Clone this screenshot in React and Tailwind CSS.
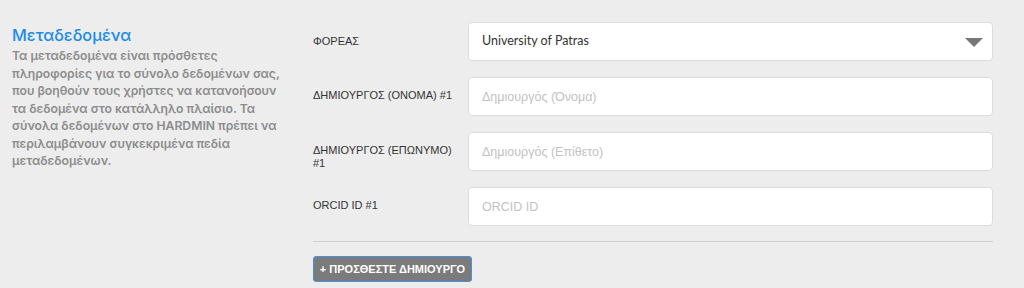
import React, { useState } from 'react';

const fields = [
  { label: 'ΔΗΜΙΟΥΡΓΟΣ (ΟΝΟΜΑ) #1', placeholder: 'Δημιουργός (Όνομα)' },
  { label: 'ΔΗΜΙΟΥΡΓΟΣ (ΕΠΩΝΥΜΟ) #1', placeholder: 'Δημιουργός (Επίθετο)' },
  { label: 'ORCID ID #1', placeholder: 'ORCID ID' },
];

const App = () => {
  const [org, setOrg] = useState('University of Patras');

  return (
    <div className="w-[1024px] h-[288px] bg-[#ededed] flex overflow-hidden">
      <div className="w-[313px] shrink-0 pl-3 pr-6 pt-[24px] font-['Inter',sans-serif]">
        <h2 className="text-[16.3px] leading-[22px] text-[#1a8be6] font-medium">Μεταδεδομένα</h2>
        <p className="mt-[1px] text-[12.2px] leading-[17.5px] font-semibold text-[#8c8c8c]">
          Τα μεταδεδομένα είναι πρόσθετες πληροφορίες για το σύνολο δεδομένων σας, που βοηθούν τους
          χρήστες να κατανοήσουν τα δεδομένα στο κατάλληλο πλαίσιο. Τα σύνολα δεδομένων στο HARDMIN
          πρέπει να περιλαμβάνουν συγκεκριμένα πεδία μεταδεδομένων.
        </p>
      </div>

      <div className="w-[680px] pt-[22px] flex flex-col font-['Liberation_Sans',sans-serif]">
        <div className="flex flex-col gap-[16px]">
          <div className="flex items-start">
            <label className="w-[155px] shrink-0 pt-[13px] pr-2 text-[11px] leading-[13px] text-[#333]">ΦΟΡΕΑΣ</label>
            <div className="relative flex-1">
              <select
                value={org}
                onChange={(e) => setOrg(e.target.value)}
                className="appearance-none w-full h-[39px] bg-white border border-[#dcdcdc] rounded-[4px] pl-[13px] text-[12.5px] text-[#333] font-['Lato',sans-serif] outline-none"
              >
                <option>University of Patras</option>
              </select>
              <svg className="absolute right-[10px] top-[16px] pointer-events-none" width="18" height="9" viewBox="0 0 18 9">
                <polygon points="0,0 18,0 9,9" fill="#777" />
              </svg>
            </div>
          </div>

          {fields.map((f) => (
            <div key={f.label} className="flex items-start">
              <label className="w-[155px] shrink-0 pt-[12px] pr-2 text-[11px] leading-[13px] text-[#333]">{f.label}</label>
              <input
                type="text"
                placeholder={f.placeholder}
                className="flex-1 h-[39px] bg-white border border-[#dcdcdc] rounded-[4px] px-[13px] text-[12.5px] text-[#333] placeholder:text-[#c2c2c2] outline-none"
              />
            </div>
          ))}
        </div>

        <hr className="mt-[15px] border-0 border-t border-[#cfcfcf]" />

        <div className="mt-[14px]">
          <button className="h-[26px] w-[159px] bg-[#7b7b7b] border border-[#4a90e2] rounded-[3px] text-white text-[11px] font-bold">
            + ΠΡΟΣΘΕΣΤΕ ΔΗΜΙΟΥΡΓΟ
          </button>
        </div>
      </div>
    </div>
  );
};

export default App;
